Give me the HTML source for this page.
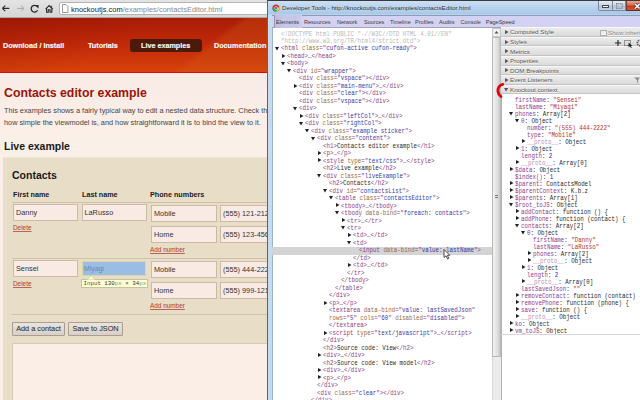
<!DOCTYPE html>
<html><head><meta charset="utf-8">
<style>
*{box-sizing:border-box}
html,body{margin:0;padding:0}
body{width:640px;height:400px;overflow:hidden;position:relative;background:linear-gradient(#f9ebe6 75px,#fbf0e7 150px,#fbf0e8 400px);font-family:"Liberation Sans",sans-serif}
.a{position:absolute;white-space:nowrap}
/* browser toolbar */
#tb{left:0;top:0;width:270px;height:18px;background:linear-gradient(#e4e4e4,#d6d6d6);border-bottom:1px solid #b0a8a8}
#addr{left:59px;top:2px;width:230px;height:13px;background:#fff;border:1px solid #b4b4b4;border-radius:2px}
#url{left:71px;top:3.5px;font-size:7.5px;line-height:11px;color:#222}
#url span{color:#8a8a8a}
/* header */
#hdr{left:0;top:18px;width:270px;height:55px;background:linear-gradient(141.5deg,rgba(0,0,0,0) 71%,rgba(210,90,20,0.3) 74%),linear-gradient(150deg,rgba(110,10,0,0.2) 0%,rgba(110,10,0,0) 45%),linear-gradient(180deg,#a81c06 0%,#c02808 45%,#d8420c 100%);border-bottom:1px solid #d80c08;overflow:hidden}
.nav{font-weight:bold;color:#fbf8f6;font-size:8px;line-height:10px;transform:scaleX(0.9);transform-origin:0 0;-webkit-text-stroke:0.15px #fff}
#pill{left:130px;top:21px;width:72px;height:13px;background:#4c1a0a;border-radius:3px}
/* content */
#h1{left:4px;top:86px;font-size:12.3px;font-weight:bold;color:#9b1408;line-height:14px}
.p{left:4px;font-size:8px;color:#454545;line-height:10px;transform:scaleX(0.915);transform-origin:0 0}
#h2a{left:4px;top:140px;font-size:10.5px;font-weight:bold;color:#1a1a1a;line-height:12px}
#box{left:3px;top:157px;width:300px;height:260px;background:#e8dec8;border-top:1px solid #ede4d2}
#h2b{left:12px;top:169px;font-size:10.5px;font-weight:bold;color:#1a1a1a;line-height:12px}
.th{font-size:7.2px;font-weight:bold;color:#1a1a1a;top:190px;line-height:9px}
.ln{height:1px;background:#cfc2ac}
.inp{background:#f9ebe4;border:1px solid #c9bba6;font-size:7.3px;color:#333;padding-left:2px;line-height:15px}
.del{font-size:6.4px;color:#b03a28;text-decoration:underline;text-decoration-thickness:0.5px;text-decoration-color:rgba(176,58,40,0.75);text-underline-offset:0.8px;line-height:8px}
.btn{background:linear-gradient(#ece4dc,#d8cfc6);border:1px solid #a89e95;border-radius:1px;font-size:7.3px;color:#222;line-height:11px;text-align:center}
</style></head><body>

<!-- browser toolbar -->
<div class="a" id="tb"></div>
<div class="a" id="addr"></div>
<svg class="a" style="left:0;top:0" width="60" height="18">
  <path d="M2.3 8.4 H9.3 M2.3 8.4 L5.3 5.6 M2.3 8.4 L5.3 11.2" stroke="#2a2a2a" stroke-width="1.1" fill="none"/>
  <path d="M17 8.4 H24 M24 8.4 L21 5.6 M24 8.4 L21 11.2" stroke="#a8a8a8" stroke-width="1" fill="none"/>
  <path d="M37.3 6.6 A3.4 3.4 0 1 0 37.6 10.3" stroke="#2a2a2a" stroke-width="1.3" fill="none"/>
  <path d="M35.2 5.2 L38.6 5.0 L38.4 8.4 Z" fill="#2a2a2a"/>
  <path d="M45.6 9.2 L49.2 5.6 L52.8 9.2 M46.6 8.4 V12.2 H48.3 V9.8 H50.1 V12.2 H51.8 V8.4" stroke="#2a2a2a" stroke-width="1.1" fill="none"/><rect x="50.8" y="5.8" width="1.1" height="2.4" fill="#2a2a2a"/>
</svg>
<svg class="a" style="left:62px;top:4px" width="7" height="9"><path d="M0.5 0.5 H4 L6 2.5 V8.5 H0.5 Z" fill="#fff" stroke="#999" stroke-width="1"/></svg>
<div class="a" id="url">knockoutjs.com<span>/examples/contactsEditor.html</span></div>

<!-- header -->
<div class="a" id="hdr"></div>
<div class="a" id="pill" style="top:39px"></div>
<div class="a nav" style="left:3px;top:41.2px">Download / Install</div>
<div class="a nav" style="left:88px;top:41.2px">Tutorials</div>
<div class="a nav" style="left:141px;top:41.2px">Live examples</div>
<div class="a nav" style="left:214px;top:41.2px">Documentation</div>

<!-- content -->
<div class="a" id="h1">Contacts editor example</div>
<div class="a p" style="top:105.6px">This examples shows a fairly typical way to edit a nested data structure. Check the</div>
<div class="a p" style="top:117.6px">how simple the viewmodel is, and how straightforward it is to bind the view to it.</div>
<div class="a" id="h2a">Live example</div>
<div class="a" id="box"></div>
<div class="a" id="h2b">Contacts</div>
<div class="a th" style="left:13px">First name</div>
<div class="a th" style="left:82px">Last name</div>
<div class="a th" style="left:150px">Phone numbers</div>
<div class="a ln" style="left:12px;top:202px;width:260px"></div>
<div class="a inp" style="left:13px;top:204.2px;width:65px;height:16.5px">Danny</div>
<div class="a inp" style="left:81.5px;top:204.2px;width:65px;height:16.5px">LaRusso</div>
<div class="a inp" style="left:151px;top:205px;width:66px;height:17px">Mobile</div>
<div class="a inp" style="left:220px;top:205px;width:66px;height:17px">(555) 121-2121</div>
<div class="a inp" style="left:151px;top:225.5px;width:66px;height:17px">Home</div>
<div class="a inp" style="left:220px;top:225.5px;width:66px;height:17px">(555) 123-4567</div>
<div class="a del" style="left:13px;top:224px">Delete</div>
<div class="a del" style="left:150px;top:246px">Add number</div>
<div class="a ln" style="left:12px;top:258px;width:260px"></div>
<div class="a inp" style="left:13px;top:260.3px;width:65px;height:16.3px">Sensei</div>
<div class="a" style="left:81.8px;top:260.5px;width:64.5px;height:15.8px;background:#99bde4;border:1.4px solid #dcd9a0;font-size:6.9px;color:#6888b4;padding-left:1.2px;line-height:14px">Miyagi</div>
<div class="a inp" style="left:151px;top:261px;width:66px;height:17px">Mobile</div>
<div class="a inp" style="left:220px;top:261px;width:66px;height:17px">(555) 444-2222</div>
<div class="a inp" style="left:151px;top:281.5px;width:66px;height:17px">Home</div>
<div class="a inp" style="left:220px;top:281.5px;width:66px;height:17px">(555) 999-1212</div>
<div class="a del" style="left:13px;top:280px">Delete</div>
<div class="a del" style="left:150px;top:302px">Add number</div>
<div class="a" style="left:81.3px;top:278.6px;width:66.8px;height:9.4px;background:#ffffd2;border:1px solid #c6c4a0;font-family:'Liberation Mono';font-size:5.8px;line-height:7.6px;color:#5a3a50;padding-left:1.2px">Input <span style="color:#333">130</span><span style="color:#888">px</span> × <span style="color:#333">34</span><span style="color:#888">px</span></div>
<svg class="a" style="left:87px;top:275px" width="9" height="5"><path d="M0 4.6 L4.2 0.6 L8.4 4.6" fill="#ffffd2" stroke="#c6c4a0" stroke-width="0.8"/></svg>
<div class="a ln" style="left:12px;top:314px;width:260px"></div>
<div class="a btn" style="left:12px;top:322px;width:53px;height:14px">Add a contact</div>
<div class="a btn" style="left:68px;top:322px;width:55px;height:14px">Save to JSON</div>
<div class="a" style="left:12px;top:343px;width:270px;height:70px;background:#fbeee6;border:1px solid #d6cab6"></div>


<style>
.mono{font-family:"Liberation Mono",monospace;font-size:6.3px;line-height:8px;color:#222;transform:scaleX(0.921);transform-origin:0 0}
#dtf{left:267px;top:0px;width:373px;height:400px;background:linear-gradient(#c9def4 1px,#bcd5ef 5px,#a9c8e8 13px,#c8dcf0 14px,#c4daf0 100%);border-left:1px solid #5a6470;border-top:1px solid #3a3a3a}
#dtc{left:271.5px;top:15px;width:368.5px;height:385px;background:#fff;border-left:1px solid #9fb4cc}
#tabs{left:272px;top:14.5px;width:368px;height:13.5px;background:#d4d2f3;border-top:1px solid #8e9bb8;border-bottom:1px solid #a4a2c4}
.tab{top:17.5px;font-size:5.55px;line-height:8px;color:#3a3a3a}
.sh{background:linear-gradient(#ececec,#dadada);border-top:1px solid #f8f8f8;border-bottom:1px solid #c4c4c4}
.sht{font-size:6.2px;line-height:8px;color:#555;text-shadow:0 0.5px 0 #fff}
</style>
<div class="a" id="dtf"></div>
<svg class="a" style="left:271.5px;top:4px" width="8" height="8" viewBox="0 0 18 18">
 <circle cx="9" cy="9" r="8" fill="#e0302a"/>
 <path d="M9 9 L1.1 10.3 A8 8 0 0 0 9 17 Z" fill="#2ca44e"/>
 <path d="M9 9 L16.8 7.5 A8 8 0 0 1 9 17 Z" fill="#f7c52a"/>
 <path d="M9 9 L1.1 10.3 A8 8 0 0 0 9 17 L9 17 L12.5 11 Z" fill="#2ca44e"/>
 <circle cx="9" cy="9" r="3.8" fill="#fff"/><circle cx="9" cy="9" r="2.9" fill="#3f7fd8"/>
</svg>
<div class="a" style="left:282px;top:3.6px;font-size:6.15px;line-height:8px;color:#2a2a2a;text-shadow:0 0 2px #eef4fa">Developer Tools - http://knockoutjs.com/examples/contactsEditor.html</div>
<div class="a" style="left:598px;top:0.8px;width:14.5px;height:9.8px;background:linear-gradient(#e6edf5,#ccd8e6 45%,#b2c2d6 55%,#c4d2e2);border:1px solid #7a8898;border-top:none;border-radius:0 0 0 2px"></div>
<div class="a" style="left:602px;top:5.2px;width:7px;height:2.6px;background:#fff;border:0.7px solid #3c4a5c;border-radius:0.5px"></div>
<div class="a" style="left:612.5px;top:0.8px;width:13px;height:9.8px;background:linear-gradient(#e6edf5,#ccd8e6 45%,#b2c2d6 55%,#c4d2e2);border-right:1px solid #7a8898;border-bottom:1px solid #7a8898"></div>
<svg class="a" style="left:615.5px;top:2.5px" width="7" height="6"><rect x="0.6" y="0.6" width="5.8" height="4.8" fill="none" stroke="#7b8796" stroke-width="1.2" stroke-dasharray="1 0.6"/></svg>
<div class="a" style="left:625.5px;top:0.8px;width:16px;height:9.8px;background:linear-gradient(#eca898,#d86a50 45%,#c23a20 55%,#d05838);border-bottom:1px solid #6a2a20;border-left:1px solid #7a3a30"></div>
<svg class="a" style="left:634px;top:2.5px" width="7" height="7"><path d="M1 1 L5.5 5.5 M5.5 1 L1 5.5" stroke="#4a1a10" stroke-width="2.6"/><path d="M1 1 L5.5 5.5 M5.5 1 L1 5.5" stroke="#fff" stroke-width="1.6"/></svg>
<div class="a" id="dtc"></div>
<div class="a" id="tabs"></div>
<div class="a" style="left:274px;top:15px;width:28px;height:12.5px;background:linear-gradient(90deg,#bebcdc,#c8c6e6 30%,#c8c6e6 80%,#d0cef0);border-left:1px solid #9896bc"></div>
<div class="a tab" style="left:276px">Elements</div>
<div class="a tab" style="left:304px">Resources</div>
<div class="a tab" style="left:337px">Network</div>
<div class="a tab" style="left:364px">Sources</div>
<div class="a tab" style="left:390px">Timeline</div>
<div class="a tab" style="left:415px">Profiles</div>
<div class="a tab" style="left:439px">Audits</div>
<div class="a tab" style="left:460.5px">Console</div>
<div class="a tab" style="left:485.7px">PageSpeed</div>
<div class="a mono" style="left:281.00px;top:30.50px"><span style="color:#b8b8b8">&lt;!DOCTYPE html PUBLIC &quot;-//W3C//DTD HTML 4.01//EN&quot;</span></div>
<div class="a mono" style="left:281.00px;top:37.98px"><span style="color:#b8b8b8">&quot;http://www.w3.org/TR/html4/strict.dtd&quot;&gt;</span></div>
<div class="a mono" style="left:281.00px;top:45.46px"><span style="color:#8a3c86">&lt;html</span><span style="color:#8a3c86"> </span><span style="color:#9e6a38">class</span><span style="color:#8a3c86">=&quot;</span><span style="color:#3a3aa4">cufon-active cufon-ready</span><span style="color:#8a3c86">&quot;</span><span style="color:#8a3c86">&gt;</span></div>
<svg class="a" style="left:275.20px;top:46.76px" width="5" height="4"><path d="M0 0 H4 L2 3.5 Z" fill="#222"/></svg>
<div class="a mono" style="left:287.00px;top:52.94px"><span style="color:#8a3c86">&lt;head</span><span style="color:#8a3c86">&gt;</span><span style="color:#2a2a2a">…</span><span style="color:#8a3c86">&lt;/head</span><span style="color:#8a3c86">&gt;</span></div>
<svg class="a" style="left:281.70px;top:53.74px" width="5" height="5"><path d="M0 0 V4 L3.5 2 Z" fill="#222"/></svg>
<div class="a mono" style="left:287.00px;top:60.42px"><span style="color:#8a3c86">&lt;body</span><span style="color:#8a3c86">&gt;</span></div>
<svg class="a" style="left:281.20px;top:61.72px" width="5" height="4"><path d="M0 0 H4 L2 3.5 Z" fill="#222"/></svg>
<div class="a mono" style="left:293.00px;top:67.90px"><span style="color:#8a3c86">&lt;div</span><span style="color:#8a3c86"> </span><span style="color:#9e6a38">id</span><span style="color:#8a3c86">=&quot;</span><span style="color:#3a3aa4">wrapper</span><span style="color:#8a3c86">&quot;</span><span style="color:#8a3c86">&gt;</span></div>
<svg class="a" style="left:287.20px;top:69.20px" width="5" height="4"><path d="M0 0 H4 L2 3.5 Z" fill="#222"/></svg>
<div class="a mono" style="left:299.00px;top:75.38px"><span style="color:#8a3c86">&lt;div</span><span style="color:#8a3c86"> </span><span style="color:#9e6a38">class</span><span style="color:#8a3c86">=&quot;</span><span style="color:#3a3aa4">vspace</span><span style="color:#8a3c86">&quot;</span><span style="color:#8a3c86">&gt;</span><span style="color:#8a3c86">&lt;/div</span><span style="color:#8a3c86">&gt;</span></div>
<div class="a mono" style="left:299.00px;top:82.86px"><span style="color:#8a3c86">&lt;div</span><span style="color:#8a3c86"> </span><span style="color:#9e6a38">class</span><span style="color:#8a3c86">=&quot;</span><span style="color:#3a3aa4">main-menu</span><span style="color:#8a3c86">&quot;</span><span style="color:#8a3c86">&gt;</span><span style="color:#2a2a2a">…</span><span style="color:#8a3c86">&lt;/div</span><span style="color:#8a3c86">&gt;</span></div>
<svg class="a" style="left:293.70px;top:83.66px" width="5" height="5"><path d="M0 0 V4 L3.5 2 Z" fill="#222"/></svg>
<div class="a mono" style="left:299.00px;top:90.34px"><span style="color:#8a3c86">&lt;div</span><span style="color:#8a3c86"> </span><span style="color:#9e6a38">class</span><span style="color:#8a3c86">=&quot;</span><span style="color:#3a3aa4">clear</span><span style="color:#8a3c86">&quot;</span><span style="color:#8a3c86">&gt;</span><span style="color:#8a3c86">&lt;/div</span><span style="color:#8a3c86">&gt;</span></div>
<div class="a mono" style="left:299.00px;top:97.82px"><span style="color:#8a3c86">&lt;div</span><span style="color:#8a3c86"> </span><span style="color:#9e6a38">class</span><span style="color:#8a3c86">=&quot;</span><span style="color:#3a3aa4">vspace</span><span style="color:#8a3c86">&quot;</span><span style="color:#8a3c86">&gt;</span><span style="color:#8a3c86">&lt;/div</span><span style="color:#8a3c86">&gt;</span></div>
<div class="a mono" style="left:299.00px;top:105.30px"><span style="color:#8a3c86">&lt;div</span><span style="color:#8a3c86">&gt;</span></div>
<svg class="a" style="left:293.20px;top:106.60px" width="5" height="4"><path d="M0 0 H4 L2 3.5 Z" fill="#222"/></svg>
<div class="a mono" style="left:305.00px;top:112.78px"><span style="color:#8a3c86">&lt;div</span><span style="color:#8a3c86"> </span><span style="color:#9e6a38">class</span><span style="color:#8a3c86">=&quot;</span><span style="color:#3a3aa4">leftCol</span><span style="color:#8a3c86">&quot;</span><span style="color:#8a3c86">&gt;</span><span style="color:#2a2a2a">…</span><span style="color:#8a3c86">&lt;/div</span><span style="color:#8a3c86">&gt;</span></div>
<svg class="a" style="left:299.70px;top:113.58px" width="5" height="5"><path d="M0 0 V4 L3.5 2 Z" fill="#222"/></svg>
<div class="a mono" style="left:305.00px;top:120.26px"><span style="color:#8a3c86">&lt;div</span><span style="color:#8a3c86"> </span><span style="color:#9e6a38">class</span><span style="color:#8a3c86">=&quot;</span><span style="color:#3a3aa4">rightCol</span><span style="color:#8a3c86">&quot;</span><span style="color:#8a3c86">&gt;</span></div>
<svg class="a" style="left:299.20px;top:121.56px" width="5" height="4"><path d="M0 0 H4 L2 3.5 Z" fill="#222"/></svg>
<div class="a mono" style="left:311.00px;top:127.74px"><span style="color:#8a3c86">&lt;div</span><span style="color:#8a3c86"> </span><span style="color:#9e6a38">class</span><span style="color:#8a3c86">=&quot;</span><span style="color:#3a3aa4">example sticker</span><span style="color:#8a3c86">&quot;</span><span style="color:#8a3c86">&gt;</span></div>
<svg class="a" style="left:305.20px;top:129.04px" width="5" height="4"><path d="M0 0 H4 L2 3.5 Z" fill="#222"/></svg>
<div class="a mono" style="left:317.00px;top:135.22px"><span style="color:#8a3c86">&lt;div</span><span style="color:#8a3c86"> </span><span style="color:#9e6a38">class</span><span style="color:#8a3c86">=&quot;</span><span style="color:#3a3aa4">content</span><span style="color:#8a3c86">&quot;</span><span style="color:#8a3c86">&gt;</span></div>
<svg class="a" style="left:311.20px;top:136.52px" width="5" height="4"><path d="M0 0 H4 L2 3.5 Z" fill="#222"/></svg>
<div class="a mono" style="left:323.00px;top:142.70px"><span style="color:#8a3c86">&lt;h1</span><span style="color:#8a3c86">&gt;</span><span style="color:#2a2a2a">Contacts editor example</span><span style="color:#8a3c86">&lt;/h1</span><span style="color:#8a3c86">&gt;</span></div>
<div class="a mono" style="left:323.00px;top:150.18px"><span style="color:#8a3c86">&lt;p</span><span style="color:#8a3c86">&gt;</span><span style="color:#2a2a2a">…</span><span style="color:#8a3c86">&lt;/p</span><span style="color:#8a3c86">&gt;</span></div>
<svg class="a" style="left:317.70px;top:150.98px" width="5" height="5"><path d="M0 0 V4 L3.5 2 Z" fill="#222"/></svg>
<div class="a mono" style="left:323.00px;top:157.66px"><span style="color:#8a3c86">&lt;style</span><span style="color:#8a3c86"> </span><span style="color:#9e6a38">type</span><span style="color:#8a3c86">=&quot;</span><span style="color:#3a3aa4">text/css</span><span style="color:#8a3c86">&quot;</span><span style="color:#8a3c86">&gt;</span><span style="color:#2a2a2a">…</span><span style="color:#8a3c86">&lt;/style</span><span style="color:#8a3c86">&gt;</span></div>
<svg class="a" style="left:317.70px;top:158.46px" width="5" height="5"><path d="M0 0 V4 L3.5 2 Z" fill="#222"/></svg>
<div class="a mono" style="left:323.00px;top:165.14px"><span style="color:#8a3c86">&lt;h2</span><span style="color:#8a3c86">&gt;</span><span style="color:#2a2a2a">Live example</span><span style="color:#8a3c86">&lt;/h2</span><span style="color:#8a3c86">&gt;</span></div>
<div class="a mono" style="left:323.00px;top:172.62px"><span style="color:#8a3c86">&lt;div</span><span style="color:#8a3c86"> </span><span style="color:#9e6a38">class</span><span style="color:#8a3c86">=&quot;</span><span style="color:#3a3aa4">liveExample</span><span style="color:#8a3c86">&quot;</span><span style="color:#8a3c86">&gt;</span></div>
<svg class="a" style="left:317.20px;top:173.92px" width="5" height="4"><path d="M0 0 H4 L2 3.5 Z" fill="#222"/></svg>
<div class="a mono" style="left:329.00px;top:180.10px"><span style="color:#8a3c86">&lt;h2</span><span style="color:#8a3c86">&gt;</span><span style="color:#2a2a2a">Contacts</span><span style="color:#8a3c86">&lt;/h2</span><span style="color:#8a3c86">&gt;</span></div>
<div class="a mono" style="left:329.00px;top:187.58px"><span style="color:#8a3c86">&lt;div</span><span style="color:#8a3c86"> </span><span style="color:#9e6a38">id</span><span style="color:#8a3c86">=&quot;</span><span style="color:#3a3aa4">contactsList</span><span style="color:#8a3c86">&quot;</span><span style="color:#8a3c86">&gt;</span></div>
<svg class="a" style="left:323.20px;top:188.88px" width="5" height="4"><path d="M0 0 H4 L2 3.5 Z" fill="#222"/></svg>
<div class="a mono" style="left:335.00px;top:195.06px"><span style="color:#8a3c86">&lt;table</span><span style="color:#8a3c86"> </span><span style="color:#9e6a38">class</span><span style="color:#8a3c86">=&quot;</span><span style="color:#3a3aa4">contactsEditor</span><span style="color:#8a3c86">&quot;</span><span style="color:#8a3c86">&gt;</span></div>
<svg class="a" style="left:329.20px;top:196.36px" width="5" height="4"><path d="M0 0 H4 L2 3.5 Z" fill="#222"/></svg>
<div class="a mono" style="left:341.00px;top:202.54px"><span style="color:#8a3c86">&lt;tbody</span><span style="color:#8a3c86">&gt;</span><span style="color:#2a2a2a">…</span><span style="color:#8a3c86">&lt;/tbody</span><span style="color:#8a3c86">&gt;</span></div>
<svg class="a" style="left:335.70px;top:203.34px" width="5" height="5"><path d="M0 0 V4 L3.5 2 Z" fill="#222"/></svg>
<div class="a mono" style="left:341.00px;top:210.02px"><span style="color:#8a3c86">&lt;tbody</span><span style="color:#8a3c86"> </span><span style="color:#9e6a38">data-bind</span><span style="color:#8a3c86">=&quot;</span><span style="color:#3a3aa4">foreach: contacts</span><span style="color:#8a3c86">&quot;</span><span style="color:#8a3c86">&gt;</span></div>
<svg class="a" style="left:335.20px;top:211.32px" width="5" height="4"><path d="M0 0 H4 L2 3.5 Z" fill="#222"/></svg>
<div class="a mono" style="left:347.00px;top:217.50px"><span style="color:#8a3c86">&lt;tr</span><span style="color:#8a3c86">&gt;</span><span style="color:#2a2a2a">…</span><span style="color:#8a3c86">&lt;/tr</span><span style="color:#8a3c86">&gt;</span></div>
<svg class="a" style="left:341.70px;top:218.30px" width="5" height="5"><path d="M0 0 V4 L3.5 2 Z" fill="#222"/></svg>
<div class="a mono" style="left:347.00px;top:224.98px"><span style="color:#8a3c86">&lt;tr</span><span style="color:#8a3c86">&gt;</span></div>
<svg class="a" style="left:341.20px;top:226.28px" width="5" height="4"><path d="M0 0 H4 L2 3.5 Z" fill="#222"/></svg>
<div class="a mono" style="left:353.00px;top:232.46px"><span style="color:#8a3c86">&lt;td</span><span style="color:#8a3c86">&gt;</span><span style="color:#2a2a2a">…</span><span style="color:#8a3c86">&lt;/td</span><span style="color:#8a3c86">&gt;</span></div>
<svg class="a" style="left:347.70px;top:233.26px" width="5" height="5"><path d="M0 0 V4 L3.5 2 Z" fill="#222"/></svg>
<div class="a mono" style="left:353.00px;top:239.94px"><span style="color:#8a3c86">&lt;td</span><span style="color:#8a3c86">&gt;</span></div>
<svg class="a" style="left:347.20px;top:241.24px" width="5" height="4"><path d="M0 0 H4 L2 3.5 Z" fill="#222"/></svg>
<div class="a" style="left:272px;top:246.92px;width:220px;height:8px;background:#d4d4d4"></div>
<div class="a mono" style="left:359.00px;top:247.42px"><span style="color:#8a3c86">&lt;input</span><span style="color:#8a3c86"> </span><span style="color:#9e6a38">data-bind</span><span style="color:#8a3c86">=&quot;</span><span style="color:#3a3aa4">value: lastName</span><span style="color:#8a3c86">&quot;</span><span style="color:#8a3c86">&gt;</span></div>
<div class="a mono" style="left:353.00px;top:254.90px"><span style="color:#8a3c86">&lt;/td</span><span style="color:#8a3c86">&gt;</span></div>
<div class="a mono" style="left:353.00px;top:262.38px"><span style="color:#8a3c86">&lt;td</span><span style="color:#8a3c86">&gt;</span><span style="color:#2a2a2a">…</span><span style="color:#8a3c86">&lt;/td</span><span style="color:#8a3c86">&gt;</span></div>
<svg class="a" style="left:347.70px;top:263.18px" width="5" height="5"><path d="M0 0 V4 L3.5 2 Z" fill="#222"/></svg>
<div class="a mono" style="left:347.00px;top:269.86px"><span style="color:#8a3c86">&lt;/tr</span><span style="color:#8a3c86">&gt;</span></div>
<div class="a mono" style="left:341.00px;top:277.34px"><span style="color:#8a3c86">&lt;/tbody</span><span style="color:#8a3c86">&gt;</span></div>
<div class="a mono" style="left:335.00px;top:284.82px"><span style="color:#8a3c86">&lt;/table</span><span style="color:#8a3c86">&gt;</span></div>
<div class="a mono" style="left:329.00px;top:292.30px"><span style="color:#8a3c86">&lt;/div</span><span style="color:#8a3c86">&gt;</span></div>
<div class="a mono" style="left:329.00px;top:299.78px"><span style="color:#8a3c86">&lt;p</span><span style="color:#8a3c86">&gt;</span><span style="color:#2a2a2a">…</span><span style="color:#8a3c86">&lt;/p</span><span style="color:#8a3c86">&gt;</span></div>
<svg class="a" style="left:323.70px;top:300.58px" width="5" height="5"><path d="M0 0 V4 L3.5 2 Z" fill="#222"/></svg>
<div class="a mono" style="left:329.00px;top:307.26px"><span style="color:#8a3c86">&lt;textarea</span><span style="color:#8a3c86"> </span><span style="color:#9e6a38">data-bind</span><span style="color:#8a3c86">=&quot;</span><span style="color:#3a3aa4">value: lastSavedJson</span><span style="color:#8a3c86">&quot;</span></div>
<div class="a mono" style="left:329.00px;top:314.74px"><span style="color:#9e6a38">rows</span><span style="color:#8a3c86">=&quot;</span><span style="color:#3a3aa4">5</span><span style="color:#8a3c86">&quot;</span><span style="color:#8a3c86"> </span><span style="color:#9e6a38">cols</span><span style="color:#8a3c86">=&quot;</span><span style="color:#3a3aa4">60</span><span style="color:#8a3c86">&quot;</span><span style="color:#8a3c86"> </span><span style="color:#9e6a38">disabled</span><span style="color:#8a3c86">=&quot;</span><span style="color:#3a3aa4">disabled</span><span style="color:#8a3c86">&quot;</span><span style="color:#8a3c86">&gt;</span></div>
<div class="a mono" style="left:329.00px;top:322.22px"><span style="color:#8a3c86">&lt;/textarea</span><span style="color:#8a3c86">&gt;</span></div>
<div class="a mono" style="left:329.00px;top:329.70px"><span style="color:#8a3c86">&lt;script</span><span style="color:#8a3c86"> </span><span style="color:#9e6a38">type</span><span style="color:#8a3c86">=&quot;</span><span style="color:#3a3aa4">text/javascript</span><span style="color:#8a3c86">&quot;</span><span style="color:#8a3c86">&gt;</span><span style="color:#2a2a2a">…</span><span style="color:#8a3c86">&lt;/script</span><span style="color:#8a3c86">&gt;</span></div>
<svg class="a" style="left:323.70px;top:330.50px" width="5" height="5"><path d="M0 0 V4 L3.5 2 Z" fill="#222"/></svg>
<div class="a mono" style="left:323.00px;top:337.18px"><span style="color:#8a3c86">&lt;/div</span><span style="color:#8a3c86">&gt;</span></div>
<div class="a mono" style="left:323.00px;top:344.66px"><span style="color:#8a3c86">&lt;h2</span><span style="color:#8a3c86">&gt;</span><span style="color:#2a2a2a">Source code: View</span><span style="color:#8a3c86">&lt;/h2</span><span style="color:#8a3c86">&gt;</span></div>
<div class="a mono" style="left:323.00px;top:352.14px"><span style="color:#8a3c86">&lt;div</span><span style="color:#8a3c86">&gt;</span><span style="color:#2a2a2a">…</span><span style="color:#8a3c86">&lt;/div</span><span style="color:#8a3c86">&gt;</span></div>
<svg class="a" style="left:317.70px;top:352.94px" width="5" height="5"><path d="M0 0 V4 L3.5 2 Z" fill="#222"/></svg>
<div class="a mono" style="left:323.00px;top:359.62px"><span style="color:#8a3c86">&lt;h2</span><span style="color:#8a3c86">&gt;</span><span style="color:#2a2a2a">Source code: View model</span><span style="color:#8a3c86">&lt;/h2</span><span style="color:#8a3c86">&gt;</span></div>
<div class="a mono" style="left:323.00px;top:367.10px"><span style="color:#8a3c86">&lt;div</span><span style="color:#8a3c86">&gt;</span><span style="color:#2a2a2a">…</span><span style="color:#8a3c86">&lt;/div</span><span style="color:#8a3c86">&gt;</span></div>
<svg class="a" style="left:317.70px;top:367.90px" width="5" height="5"><path d="M0 0 V4 L3.5 2 Z" fill="#222"/></svg>
<div class="a mono" style="left:323.00px;top:374.58px"><span style="color:#8a3c86">&lt;p</span><span style="color:#8a3c86">&gt;</span><span style="color:#2a2a2a">…</span><span style="color:#8a3c86">&lt;/p</span><span style="color:#8a3c86">&gt;</span></div>
<svg class="a" style="left:317.70px;top:375.38px" width="5" height="5"><path d="M0 0 V4 L3.5 2 Z" fill="#222"/></svg>
<div class="a mono" style="left:317.00px;top:382.06px"><span style="color:#8a3c86">&lt;/div</span><span style="color:#8a3c86">&gt;</span></div>
<div class="a mono" style="left:317.00px;top:389.54px"><span style="color:#8a3c86">&lt;div</span><span style="color:#8a3c86"> </span><span style="color:#9e6a38">class</span><span style="color:#8a3c86">=&quot;</span><span style="color:#3a3aa4">clear</span><span style="color:#8a3c86">&quot;</span><span style="color:#8a3c86">&gt;</span><span style="color:#8a3c86">&lt;/div</span><span style="color:#8a3c86">&gt;</span></div>
<div class="a mono" style="left:311.00px;top:397.02px"><span style="color:#8a3c86">&lt;/div</span><span style="color:#8a3c86">&gt;</span></div>
<div class="a" style="left:492px;top:28px;width:9px;height:372px;background:#ebebeb;border-left:1px solid #d8d8d8"></div>
<div class="a" style="left:492px;top:37px;width:9px;height:320px;background:linear-gradient(90deg,#f4f4f4,#e0e0e0 60%,#c8c8c8);border:1px solid #b8b8b8"></div>
<div class="a" style="left:492px;top:28px;width:9px;height:9px;background:#f0f0f0;border:1px solid #c8c8c8"></div>
<svg class="a" style="left:494px;top:30px" width="5" height="5"><path d="M0.5 3.5 L2.5 1 L4.5 3.5 Z" fill="#555"/></svg>
<div class="a" style="left:500.5px;top:28px;width:1px;height:372px;background:#b0b0b0"></div>
<div class="a" style="left:495px;top:195px;width:3px;height:0.8px;background:#777"></div>
<div class="a" style="left:495px;top:197px;width:3px;height:0.8px;background:#777"></div>
<div class="a sh" style="left:501px;top:27.20px;width:139px;height:9.58px"></div>
<div class="a sht" style="left:510px;top:28.40px">Computed Style</div>
<svg class="a" style="left:504.5px;top:30.09px" width="5" height="5"><path d="M0 0 V4.2 L3.6 2.1 Z" fill="#5a5a5a"/></svg>
<div class="a sh" style="left:501px;top:36.78px;width:139px;height:9.58px"></div>
<div class="a sht" style="left:510px;top:37.98px">Styles</div>
<svg class="a" style="left:504.5px;top:39.67px" width="5" height="5"><path d="M0 0 V4.2 L3.6 2.1 Z" fill="#5a5a5a"/></svg>
<div class="a sh" style="left:501px;top:46.36px;width:139px;height:9.58px"></div>
<div class="a sht" style="left:510px;top:47.56px">Metrics</div>
<svg class="a" style="left:504.5px;top:49.25px" width="5" height="5"><path d="M0 0 V4.2 L3.6 2.1 Z" fill="#5a5a5a"/></svg>
<div class="a sh" style="left:501px;top:55.94px;width:139px;height:9.58px"></div>
<div class="a sht" style="left:510px;top:57.14px">Properties</div>
<svg class="a" style="left:504.5px;top:58.83px" width="5" height="5"><path d="M0 0 V4.2 L3.6 2.1 Z" fill="#5a5a5a"/></svg>
<div class="a sh" style="left:501px;top:65.52px;width:139px;height:9.58px"></div>
<div class="a sht" style="left:510px;top:66.72px">DOM Breakpoints</div>
<svg class="a" style="left:504.5px;top:68.41px" width="5" height="5"><path d="M0 0 V4.2 L3.6 2.1 Z" fill="#5a5a5a"/></svg>
<div class="a sh" style="left:501px;top:75.10px;width:139px;height:9.58px"></div>
<div class="a sht" style="left:510px;top:76.30px">Event Listeners</div>
<svg class="a" style="left:504.5px;top:77.99px" width="5" height="5"><path d="M0 0 V4.2 L3.6 2.1 Z" fill="#5a5a5a"/></svg>
<div class="a sh" style="left:501px;top:84.68px;width:139px;height:9.58px"></div>
<div class="a sht" style="left:510px;top:85.88px">Knockout context</div>
<svg class="a" style="left:504px;top:87.87px" width="5" height="5"><path d="M0 0 H4.2 L2.1 3.6 Z" fill="#555"/></svg>
<div class="a" style="left:600px;top:30px;width:6.5px;height:6.2px;background:linear-gradient(#e8e8e8,#fafafa);border:1px solid #b0b0b0"></div>
<div class="a sht" style="left:608px;top:28.6px;color:#8a8a8a">Show inherited</div>
<svg class="a" style="left:615px;top:40px" width="6" height="6"><path d="M3 0 V6 M0 3 H6" stroke="#222" stroke-width="1.1"/></svg>
<svg class="a" style="left:623.5px;top:39.5px" width="10" height="8"><rect x="0.5" y="0.5" width="6" height="5" fill="none" stroke="#444" stroke-width="1" stroke-dasharray="1 1"/><path d="M4.5 2.5 V7.5 L5.8 6.3 L7 8 L7.8 7.5 L6.8 6 L8.5 6 Z" fill="#222"/></svg>
<svg class="a" style="left:636px;top:39px" width="6" height="8"><circle cx="4" cy="4" r="2.7" fill="none" stroke="#555" stroke-width="1.6" stroke-dasharray="1.2 0.8"/></svg>
<svg class="a" style="left:634px;top:77px" width="6" height="6"><path d="M0 0.5 H6 L4 3 V6 L3 5 V3 Z" fill="#888"/></svg>
<div class="a mono" style="left:515.00px;top:96.50px"><span style="color:#8a3c92">firstName</span>: <span style="color:#b8302a">&quot;Sensei&quot;</span></div>
<div class="a mono" style="left:515.00px;top:103.50px"><span style="color:#8a3c92">lastName</span>: <span style="color:#b8302a">&quot;Miyagi&quot;</span></div>
<div class="a mono" style="left:515.00px;top:110.50px"><span style="color:#8a3c92">phones</span>: <span style="color:#2a2a2a">Array[2]</span></div>
<svg class="a" style="left:509.20px;top:111.80px" width="5" height="4"><path d="M0 0 H4 L2 3.5 Z" fill="#222"/></svg>
<div class="a mono" style="left:521.00px;top:117.50px"><span style="color:#8a3c92">0</span>: <span style="color:#2a2a2a">Object</span></div>
<svg class="a" style="left:515.20px;top:118.80px" width="5" height="4"><path d="M0 0 H4 L2 3.5 Z" fill="#222"/></svg>
<div class="a mono" style="left:527.00px;top:124.50px"><span style="color:#8a3c92">number</span>: <span style="color:#b8302a">&quot;(555) 444-2222&quot;</span></div>
<div class="a mono" style="left:527.00px;top:131.50px"><span style="color:#8a3c92">type</span>: <span style="color:#b8302a">&quot;Mobile&quot;</span></div>
<div class="a mono" style="left:527.00px;top:138.50px"><span style="color:#b890bc">__proto__</span>: <span style="color:#2a2a2a">Object</span></div>
<svg class="a" style="left:521.70px;top:139.30px" width="5" height="5"><path d="M0 0 V4 L3.5 2 Z" fill="#222"/></svg>
<div class="a mono" style="left:521.00px;top:145.50px"><span style="color:#8a3c92">1</span>: <span style="color:#2a2a2a">Object</span></div>
<svg class="a" style="left:515.70px;top:146.30px" width="5" height="5"><path d="M0 0 V4 L3.5 2 Z" fill="#222"/></svg>
<div class="a mono" style="left:521.00px;top:152.50px"><span style="color:#8a3c92">length</span>: <span style="color:#3020c0">2</span></div>
<div class="a mono" style="left:521.00px;top:159.50px"><span style="color:#b890bc">__proto__</span>: <span style="color:#2a2a2a">Array[0]</span></div>
<svg class="a" style="left:515.70px;top:160.30px" width="5" height="5"><path d="M0 0 V4 L3.5 2 Z" fill="#222"/></svg>
<div class="a mono" style="left:515.00px;top:166.50px"><span style="color:#8a3c92">$data</span>: <span style="color:#2a2a2a">Object</span></div>
<svg class="a" style="left:509.70px;top:167.30px" width="5" height="5"><path d="M0 0 V4 L3.5 2 Z" fill="#222"/></svg>
<div class="a mono" style="left:515.00px;top:173.50px"><span style="color:#8a3c92">$index()</span>: <span style="color:#3020c0">1</span></div>
<div class="a mono" style="left:515.00px;top:180.50px"><span style="color:#8a3c92">$parent</span>: <span style="color:#2a2a2a">ContactsModel</span></div>
<svg class="a" style="left:509.70px;top:181.30px" width="5" height="5"><path d="M0 0 V4 L3.5 2 Z" fill="#222"/></svg>
<div class="a mono" style="left:515.00px;top:187.50px"><span style="color:#8a3c92">$parentContext</span>: <span style="color:#2a2a2a">K.b.z</span></div>
<svg class="a" style="left:509.70px;top:188.30px" width="5" height="5"><path d="M0 0 V4 L3.5 2 Z" fill="#222"/></svg>
<div class="a mono" style="left:515.00px;top:194.50px"><span style="color:#8a3c92">$parents</span>: <span style="color:#2a2a2a">Array[1]</span></div>
<svg class="a" style="left:509.70px;top:195.30px" width="5" height="5"><path d="M0 0 V4 L3.5 2 Z" fill="#222"/></svg>
<div class="a mono" style="left:515.00px;top:201.50px"><span style="color:#8a3c92">$root_toJS</span>: <span style="color:#2a2a2a">Object</span></div>
<svg class="a" style="left:509.20px;top:202.80px" width="5" height="4"><path d="M0 0 H4 L2 3.5 Z" fill="#222"/></svg>
<div class="a mono" style="left:521.00px;top:208.50px"><span style="color:#8a3c92">addContact</span>: <span style="color:#2a2a2a">function () {</span></div>
<svg class="a" style="left:515.70px;top:209.30px" width="5" height="5"><path d="M0 0 V4 L3.5 2 Z" fill="#222"/></svg>
<div class="a mono" style="left:521.00px;top:215.50px"><span style="color:#8a3c92">addPhone</span>: <span style="color:#2a2a2a">function (contact) {</span></div>
<svg class="a" style="left:515.70px;top:216.30px" width="5" height="5"><path d="M0 0 V4 L3.5 2 Z" fill="#222"/></svg>
<div class="a mono" style="left:521.00px;top:222.50px"><span style="color:#8a3c92">contacts</span>: <span style="color:#2a2a2a">Array[2]</span></div>
<svg class="a" style="left:515.20px;top:223.80px" width="5" height="4"><path d="M0 0 H4 L2 3.5 Z" fill="#222"/></svg>
<div class="a mono" style="left:527.00px;top:229.50px"><span style="color:#8a3c92">0</span>: <span style="color:#2a2a2a">Object</span></div>
<svg class="a" style="left:521.20px;top:230.80px" width="5" height="4"><path d="M0 0 H4 L2 3.5 Z" fill="#222"/></svg>
<div class="a mono" style="left:533.00px;top:236.50px"><span style="color:#8a3c92">firstName</span>: <span style="color:#b8302a">&quot;Danny&quot;</span></div>
<div class="a mono" style="left:533.00px;top:243.50px"><span style="color:#8a3c92">lastName</span>: <span style="color:#b8302a">&quot;LaRusso&quot;</span></div>
<div class="a mono" style="left:533.00px;top:250.50px"><span style="color:#8a3c92">phones</span>: <span style="color:#2a2a2a">Array[2]</span></div>
<svg class="a" style="left:527.70px;top:251.30px" width="5" height="5"><path d="M0 0 V4 L3.5 2 Z" fill="#222"/></svg>
<div class="a mono" style="left:533.00px;top:257.50px"><span style="color:#b890bc">__proto__</span>: <span style="color:#2a2a2a">Object</span></div>
<svg class="a" style="left:527.70px;top:258.30px" width="5" height="5"><path d="M0 0 V4 L3.5 2 Z" fill="#222"/></svg>
<div class="a mono" style="left:527.00px;top:264.50px"><span style="color:#8a3c92">1</span>: <span style="color:#2a2a2a">Object</span></div>
<svg class="a" style="left:521.70px;top:265.30px" width="5" height="5"><path d="M0 0 V4 L3.5 2 Z" fill="#222"/></svg>
<div class="a mono" style="left:527.00px;top:271.50px"><span style="color:#8a3c92">length</span>: <span style="color:#3020c0">2</span></div>
<div class="a mono" style="left:527.00px;top:278.50px"><span style="color:#b890bc">__proto__</span>: <span style="color:#2a2a2a">Array[0]</span></div>
<svg class="a" style="left:521.70px;top:279.30px" width="5" height="5"><path d="M0 0 V4 L3.5 2 Z" fill="#222"/></svg>
<div class="a mono" style="left:521.00px;top:285.50px"><span style="color:#8a3c92">lastSavedJson</span>: <span style="color:#b8302a">&quot;&quot;</span></div>
<div class="a mono" style="left:521.00px;top:292.50px"><span style="color:#8a3c92">removeContact</span>: <span style="color:#2a2a2a">function (contact) {</span></div>
<svg class="a" style="left:515.70px;top:293.30px" width="5" height="5"><path d="M0 0 V4 L3.5 2 Z" fill="#222"/></svg>
<div class="a mono" style="left:521.00px;top:299.50px"><span style="color:#8a3c92">removePhone</span>: <span style="color:#2a2a2a">function (phone) {</span></div>
<svg class="a" style="left:515.70px;top:300.30px" width="5" height="5"><path d="M0 0 V4 L3.5 2 Z" fill="#222"/></svg>
<div class="a mono" style="left:521.00px;top:306.50px"><span style="color:#8a3c92">save</span>: <span style="color:#2a2a2a">function () {</span></div>
<svg class="a" style="left:515.70px;top:307.30px" width="5" height="5"><path d="M0 0 V4 L3.5 2 Z" fill="#222"/></svg>
<div class="a mono" style="left:521.00px;top:313.50px"><span style="color:#b890bc">__proto__</span>: <span style="color:#2a2a2a">Object</span></div>
<svg class="a" style="left:515.70px;top:314.30px" width="5" height="5"><path d="M0 0 V4 L3.5 2 Z" fill="#222"/></svg>
<div class="a mono" style="left:515.00px;top:320.50px"><span style="color:#8a3c92">ko</span>: <span style="color:#2a2a2a">Object</span></div>
<svg class="a" style="left:509.70px;top:321.30px" width="5" height="5"><path d="M0 0 V4 L3.5 2 Z" fill="#222"/></svg>
<div class="a mono" style="left:515.00px;top:327.50px"><span style="color:#8a3c92">vm_toJS</span>: <span style="color:#2a2a2a">Object</span></div>
<svg class="a" style="left:509.70px;top:328.30px" width="5" height="5"><path d="M0 0 V4 L3.5 2 Z" fill="#222"/></svg>
<div class="a" style="left:501px;top:334px;width:139px;height:1px;background:#d8d8d8"></div>
<svg class="a" style="left:495px;top:82px" width="10" height="17"><path d="M7.8 2.3 C4.5 2.6 2.6 6 3 9.5 C3.3 12 4.3 13.5 6 14.6" stroke="#e0000c" stroke-width="2.8" fill="none" stroke-linecap="round"/></svg>
<svg class="a" style="left:443px;top:249.3px" width="8" height="11"><path d="M1 0.5 V8.5 L3 6.8 L4.6 10 L5.8 9.4 L4.3 6.3 L6.8 6.3 Z" fill="#fff" stroke="#222" stroke-width="0.8"/></svg>

</body></html>
